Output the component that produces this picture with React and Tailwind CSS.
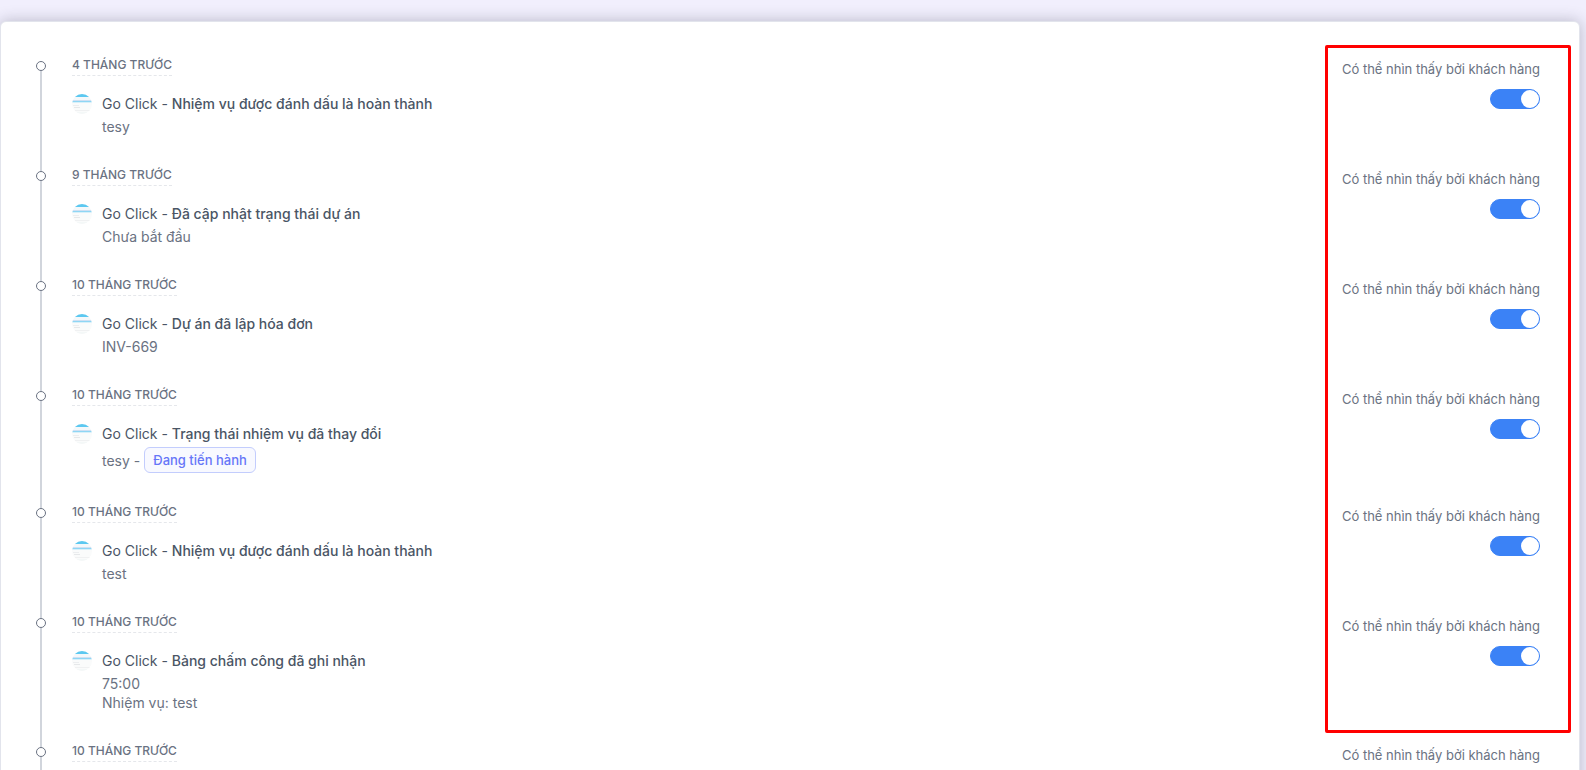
import React, { useState } from 'react';

const activities = [
  { id: 1, time: '4 tháng trước', title: 'Nhiệm vụ được đánh dấu là hoàn thành', lines: ['tesy'] },
  { id: 2, time: '9 tháng trước', title: 'Đã cập nhật trạng thái dự án', lines: ['Chưa bắt đầu'] },
  { id: 3, time: '10 tháng trước', title: 'Dự án đã lập hóa đơn', lines: ['INV-669'] },
  { id: 4, time: '10 tháng trước', title: 'Trạng thái nhiệm vụ đã thay đổi', lines: ['tesy -'], status: 'Đang tiến hành' },
  { id: 5, time: '10 tháng trước', title: 'Nhiệm vụ được đánh dấu là hoàn thành', lines: ['test'] },
  { id: 6, time: '10 tháng trước', title: 'Bảng chấm công đã ghi nhận', lines: ['75:00', 'Nhiệm vụ: test'] },
  { id: 7, time: '10 tháng trước' },
];

function Avatar() {
  return (
    <svg viewBox="0 0 20 20" className="size-5 shrink-0" aria-hidden="true">
      <defs>
        <clipPath id="avatar-clip">
          <circle cx="10" cy="10" r="10" />
        </clipPath>
      </defs>
      <g clipPath="url(#avatar-clip)">
        <rect width="20" height="20" fill="#fafbfb" />
        <rect width="20" height="3" fill="#5cc8f0" />
        <rect y="3" width="20" height="3" fill="#f4f8fa" />
        <rect y="6" width="20" height="1" fill="#cfe0f3" />
        <rect y="7" width="20" height="1" fill="#8fd6f4" />
        <rect y="8" width="20" height="1" fill="#d8f0fa" />
        <rect x="1" y="11" width="6" height="1" fill="#eceef0" />
        <rect x="2" y="13" width="6" height="1" fill="#e6e8ea" />
        <rect x="3" y="16" width="15" height="1" fill="#f0f1f2" />
        <rect y="18" width="20" height="2" fill="#f4f8f8" />
      </g>
    </svg>
  );
}

function ActivityItem({ item }) {
  const [visible, setVisible] = useState(true);
  const switchId = `visible-${item.id}`;

  return (
    <li className="flex">
      {/* timeline dot and the line down to the next one */}
      <div className="mr-[26px] flex w-[10px] flex-col items-center pt-[5px]">
        <span className="size-[10px] shrink-0 rounded-full border border-gray-500 bg-white" />
        <span className="-mb-[5px] w-[2px] flex-1 bg-gray-300" />
      </div>

      <div className="flex-1 pb-[30px]">
        <time className="block h-5 w-fit border-b border-dashed border-gray-200 text-[12px] leading-[17px] font-medium text-gray-500 uppercase">
          {item.time}
        </time>
        {item.title && (
          <div className="mt-[18px] flex gap-[10px]">
            <Avatar />
            <div>
              <p className="text-sm text-gray-600">
                <a href="#profile">Go Click</a>
                {' - '}
                <span className="font-medium">{item.title}</span>
              </p>
              <div className="mt-[3px] text-sm leading-[19px] text-gray-500">
                {item.lines.map((line) => (
                  <p key={line} className="flex items-center gap-1">
                    {line}
                    {item.status && (
                      <span className="rounded-md border border-[#c3cdfd] bg-[#f8f9ff] px-2 text-[13px] leading-6 font-medium text-[#6676f8]">
                        {item.status}
                      </span>
                    )}
                  </p>
                ))}
              </div>
            </div>
          </div>
        )}
      </div>

      <div className="flex flex-col items-end pt-[3px]">
        <label htmlFor={switchId} className="text-[13px] leading-5 text-gray-500">
          Có thể nhìn thấy bởi khách hàng
        </label>
        <input
          id={switchId}
          type="checkbox"
          checked={visible}
          onChange={(e) => setVisible(e.target.checked)}
          className="mt-[10px] h-5 w-[50px] shrink-0 cursor-pointer appearance-none rounded-full border border-gray-300 bg-gray-300 before:block before:size-[18px] before:rounded-full before:bg-white checked:border-[#3b82f6] checked:bg-[#3b82f6] checked:before:ml-auto"
        />
      </div>
    </li>
  );
}

export default function App() {
  return (
    <div className="flex h-screen overflow-hidden bg-[#f1effd] pt-[21px] pr-[6px] font-['Inter',sans-serif]">
      <div className="relative h-fit min-h-full flex-1 rounded-md border border-[#e2e4ec] bg-white pt-[34px] pr-[39px] pl-[35px] shadow-[0_0_15px_rgba(40,40,60,0.28)]">
        <ul>
          {activities.map((item) => (
            <ActivityItem key={item.id} item={item} />
          ))}
        </ul>

        {/* highlight around the visibility switches */}
        <div className="pointer-events-none absolute top-[23px] right-[8px] h-[688px] w-[246px] rounded-xs border-3 border-[#ff0000]" />
      </div>
    </div>
  );
}
